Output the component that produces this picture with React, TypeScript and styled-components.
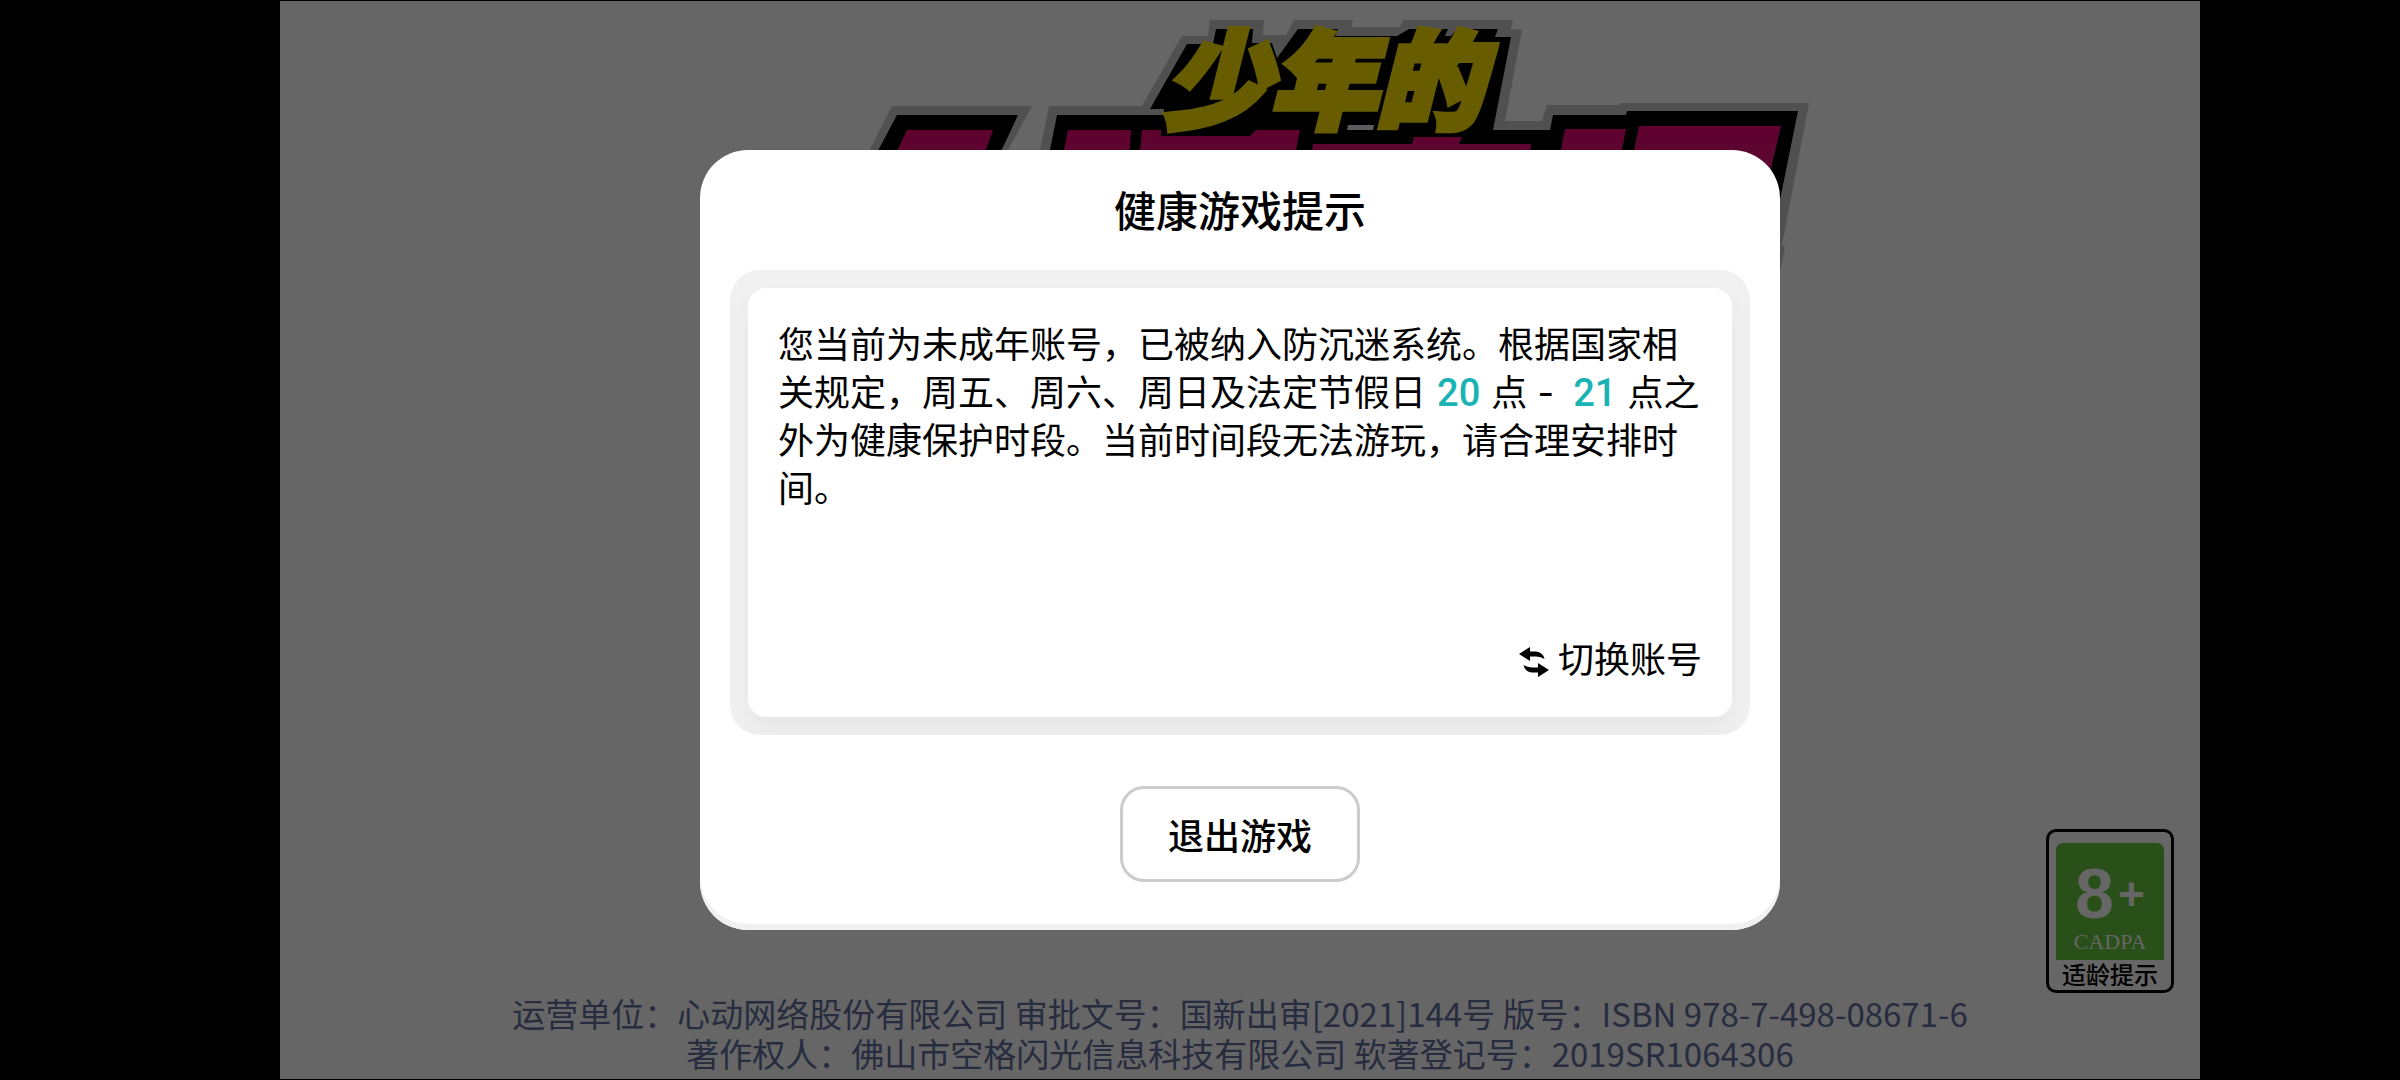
import React from "react";
import styled, { createGlobalStyle } from "styled-components";

const sans = `"Noto Sans CJK SC", "Noto Sans", sans-serif`;

const GlobalStyle = createGlobalStyle`
  *, *::before, *::after { box-sizing: border-box; }
  body { margin: 0; background: #000; font-family: ${sans}; }
  h1, p { margin: 0; }
`;

/* The left inset keeps the game clear of the camera cut-out. */
const Screen = styled.div`
  padding-left: 80px;
`;

const Stage = styled.main`
  position: relative;
  display: flex;
  max-width: calc(100vh * 16 / 9);
  min-height: 100vh;
  margin: 0 auto;
  border: solid #000;
  border-width: 1px 0;
  background: #666;
`;

const Scene = styled.div`
  flex: 1;
  display: flex;
  flex-direction: column;
`;

const LogoArea = styled.header`
  flex: 1;
  display: flex;
  justify-content: center;
  align-items: flex-start;
  padding: 9px 0 0 200px;
`;

const LogoArt = styled.svg`
  overflow: visible;
`;

const LogoWord = styled.text`
  font-family: ${sans};
  font-size: 106px;
  font-weight: 900;
  font-style: italic;
  fill: #685c00;
  stroke: #685c00;
  stroke-width: 7px;
  stroke-linejoin: miter;
`;

const BadgeRow = styled.div`
  display: flex;
  justify-content: flex-end;
  padding-right: 26px;
`;

const Badge = styled.div`
  display: flex;
  flex-direction: column;
  align-items: center;
  width: 128px;
  padding: 11px 7px 2px;
  border: 3px solid #000;
  border-radius: 10px;
`;

const BadgeFace = styled.div`
  align-self: stretch;
  display: flex;
  flex-direction: column;
  align-items: center;
  padding: 16px 0 5px;
  border-radius: 7px 7px 0 0;
  background: #295019;
  color: #666;
`;

const Age = styled.div`
  display: flex;
  align-items: center;
  gap: 4px;
  font: bold 70px/70px "Liberation Sans", Arial, sans-serif;
`;

const AgePlus = styled.span`
  font-size: 46px;
  line-height: 46px;
`;

const Agency = styled.div`
  font: 22px/26px "Liberation Serif", "Times New Roman", serif;
`;

const BadgeLabel = styled.div`
  color: #000;
  font-size: 24px;
  font-weight: 500;
  line-height: 28px;
`;

const Legal = styled.footer`
  padding-bottom: 6px;
  color: #272c3f;
  font-size: 33px;
  line-height: 40px;
  text-align: center;
`;

const Overlay = styled.div`
  position: absolute;
  inset: 0;
  display: flex;
  align-items: center;
  justify-content: center;
`;

const Dialog = styled.section`
  display: flex;
  flex-direction: column;
  align-items: center;
  width: 1080px;
  max-width: 100%;
  padding: 0 30px 48px;
  border-radius: 48px;
  background: #fff;
  box-shadow: inset 0 -6px 0 #f0f0f0;
`;

const Title = styled.h1`
  padding-bottom: 2px;
  color: #000;
  font-size: 42px;
  font-weight: 500;
  line-height: 118px;
`;

const Panel = styled.div`
  align-self: stretch;
  padding: 18px;
  border-radius: 30px;
  background: #f0f0f0;
  overflow: hidden;
`;

const Card = styled.div`
  display: flex;
  flex-direction: column;
  justify-content: space-between;
  align-items: flex-end;
  min-height: 429px;
  padding: 30px 30px 36px;
  border-radius: 18px;
  background: #fff;
  box-shadow: 0 12px 24px rgba(0, 0, 0, 0.04);
`;

const Notice = styled.p`
  align-self: stretch;
  color: #000;
  font-size: 36px;
  line-height: 48px;
`;

const Hour = styled.span`
  padding: 0 3px;
  color: #1ab3b5;
  font-family: Roboto, sans-serif;
  font-size: 38px;
  font-weight: 500;
  line-height: 1;
`;

const Dash = styled.span`
  padding-left: 2px;
  font-family: Inter, sans-serif;
  line-height: 1;
`;

const SwitchButton = styled.button`
  display: flex;
  align-items: center;
  gap: 9px;
  padding: 0;
  border: 0;
  background: none;
  color: #000;
  font: 400 36px/48px ${sans};
  cursor: pointer;
`;

const ExitButton = styled.button`
  min-width: 240px;
  margin-top: 51px;
  padding: 21px 45px;
  border: 3px solid #ccc;
  border-radius: 24px;
  background: #fff;
  color: #000;
  font: 500 36px/48px ${sans};
  cursor: pointer;
`;

const slabs = [
  "907,130 993,130 982,160 893,160",
  "1068,130 1131,130 1129,160 1062,160",
  "1142,130 1161,130 1161,136 1250,136 1256,130 1300,130 1294,160 1139,160",
  "1313,144 1412,144 1414,137 1462,137 1459,144 1531,144 1529,160 1311,160",
  "1565,129 1626,129 1620,160 1559,160",
  "1639,126 1781,126 1766,190 1626,190",
];

function Logo() {
  return (
    <LogoArt width="960" height="270" viewBox="860 10 960 270" role="img" aria-label="少年的">
      <defs>
        <linearGradient id="slab" gradientUnits="userSpaceOnUse" x1="0" y1="126" x2="0" y2="170">
          <stop offset="0" stopColor="#60002f" />
          <stop offset="1" stopColor="#5a0a30" />
        </linearGradient>
      </defs>
      <g fill="#505050">
        <polygon points="892,106 1032,106 1008,150 1000,165 862,165" />
        <polygon points="1049,106 1142,106 1182,36 1208,36 1210,20 1264,20 1263,35 1286,35 1294,20 1353,20 1351,27 1400,27 1403,20 1513,20 1511,29 1522,30 1505,121 1542,121 1547,105 1619,105 1620,103 1809,103 1782,245 1785,247 1780,272 1040,272 1040,150" />
      </g>
      <polygon points="897,115 1018,115 997,160 873,160" />
      <polygon points="1057,115 1164,115 1164,109 1150,109 1187,44 1213,44 1216,29 1253,29 1252,43 1272,43 1277,58 1298,29 1338,29 1335,36 1397,36 1409,29 1448,29 1445,36 1451,36 1457,29 1498,29 1495,37 1511,37 1493,130 1550,130 1553,115 1626,115 1627,111 1798,111 1782,190 1780,200 1048,200 1048,160" />
      <g fill="url(#slab)">
        {slabs.map((points) => (
          <polygon key={points} points={points} />
        ))}
      </g>
      <polygon fill="#5c5c60" points="1348,125 1374,125 1373,130 1347,130" />
      <LogoWord x="1164" y="120">少年的</LogoWord>
    </LogoArt>
  );
}

function SwapIcon() {
  return (
    <svg width="30" height="40" viewBox="0 -10 30 40" fill="#000" aria-hidden="true">
      <path d="M0 7 11 0V4.500H17Q24 5 25.500 12Q22 9.500 17 9.500H11V14Z" />
      <path d="M30 23 19 30V25.500H13Q6 25 4.500 18Q8 20.500 13 20.500H19V16Z" />
    </svg>
  );
}

export default function App() {
  return (
    <Screen>
      <GlobalStyle />
      <Stage lang="zh-CN">
        <Scene>
          <LogoArea>
            <Logo />
          </LogoArea>
          <BadgeRow>
            <Badge>
              <BadgeFace>
                <Age>
                  8<AgePlus>+</AgePlus>
                </Age>
                <Agency>CADPA</Agency>
              </BadgeFace>
              <BadgeLabel>适龄提示</BadgeLabel>
            </Badge>
          </BadgeRow>
          <Legal>
            <p>运营单位：心动网络股份有限公司 审批文号：国新出审[2021]144号 版号：ISBN 978-7-498-08671-6</p>
            <p>著作权人：佛山市空格闪光信息科技有限公司 软著登记号：2019SR1064306</p>
          </Legal>
        </Scene>
        <Overlay>
          <Dialog role="dialog" aria-modal="true" aria-labelledby="dialog-title">
            <Title id="dialog-title">健康游戏提示</Title>
            <Panel>
              <Card>
                <Notice>
                  您当前为未成年账号，已被纳入防沉迷系统。根据国家相关规定，周五、周六、周日及法定节假日 <Hour>20</Hour> 点 <Dash>-</Dash>&nbsp; <Hour>21</Hour> 点之外为健康保护时段。当前时间段无法游玩，请合理安排时间。
                </Notice>
                <SwitchButton type="button">
                  <SwapIcon />
                  切换账号
                </SwitchButton>
              </Card>
            </Panel>
            <ExitButton type="button">退出游戏</ExitButton>
          </Dialog>
        </Overlay>
      </Stage>
    </Screen>
  );
}
